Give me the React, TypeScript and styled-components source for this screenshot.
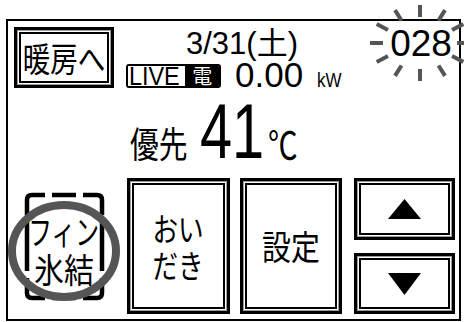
import React from "react";
import styled, { createGlobalStyle } from "styled-components";

const Global = createGlobalStyle`
  html, body { margin: 0; padding: 0; background: #fff; }
  body {
    font-family: "Liberation Sans", "Noto Sans CJK JP", sans-serif;
    color: #000;
    width: 464px;
    height: 322px;
    overflow: hidden;
  }
  #root { padding-top: 19px; }
`;

const JP = `"Noto Sans CJK JP", "Liberation Sans", sans-serif`;
const LAT = `"Liberation Sans", "Noto Sans CJK JP", sans-serif`;

const Screen = styled.div`
  box-sizing: border-box;
  margin-left: 6px;
  width: 455px;
  height: 302px;
  border: 2px solid #000;
  display: flex;
  flex-direction: column;
`;

const Narrow = styled.span<{ $sx: number; $origin?: string }>`
  display: inline-block;
  white-space: nowrap;
  transform: scaleX(${(p) => p.$sx});
  transform-origin: ${(p) => p.$origin ?? "center"};
`;

const PanelButton = styled.div<{ $w: number; $h?: number; $ml?: number }>`
  box-sizing: border-box;
  width: ${(p) => p.$w}px;
  ${(p) => (p.$h ? `height: ${p.$h}px;` : "")}
  margin-left: ${(p) => p.$ml ?? 0}px;
  border: 3px solid #000;
  box-shadow: inset 0 0 0 1px #9a9a9a, inset 0 0 0 2px #fff,
    inset 0 0 0 4px #000;
  background: #fff;
  display: flex;
  flex-direction: column;
  align-items: center;
  justify-content: center;
  font-family: ${JP};
  color: #000;
`;

const ButtonLabel = styled.div<{ $size: number; $lh?: number }>`
  font-size: ${(p) => p.$size}px;
  line-height: ${(p) => p.$lh ?? p.$size}px;
  text-align: center;
`;

/* ---------- top row ---------- */
const TopRow = styled.div`
  box-sizing: border-box;
  height: 68px;
  padding: 6px 0 0 6px;
  display: flex;
  align-items: flex-start;
`;

const InfoColumn = styled.div`
  margin-left: 12px;
  padding-top: 3px;
  display: flex;
  flex-direction: column;
`;

const DateText = styled.div`
  font-family: ${LAT};
  font-size: 31px;
  line-height: 27px;
  padding-left: 60px;
  white-space: nowrap;
`;

const PowerRow = styled.div`
  margin-top: 3px;
  display: flex;
  align-items: baseline;
`;

const LiveBadge = styled.div`
  align-self: flex-end;
  margin-bottom: 2px;
  box-sizing: border-box;
  width: 95px;
  height: 24px;
  border: 2px solid #000;
  border-radius: 3px;
  overflow: hidden;
  display: flex;
`;

const LiveText = styled.span`
  flex: 1;
  font-family: ${LAT};
  font-size: 26px;
  line-height: 20px;
  padding-left: 1px;
  background: #fff;
  color: #000;
`;

const DenText = styled.span`
  width: 38px;
  background: #000;
  color: #fff;
  font-family: ${JP};
  font-size: 20px;
  line-height: 20px;
  display: flex;
  align-items: center;
  justify-content: center;
`;

const PowerValue = styled.span`
  margin-left: 14px;
  font-family: ${LAT};
  font-size: 35px;
  line-height: 30px;
`;

const PowerUnit = styled.span`
  margin-left: 14px;
  font-family: ${LAT};
  font-size: 20px;
  line-height: 20px;
`;

const CodeBox = styled.div`
  position: relative;
  margin-left: auto;
  margin-top: -2px;
  width: 76px;
  font-family: ${LAT};
  font-size: 37px;
  line-height: 37px;
  text-align: center;
`;

const CodeText = styled.span`
  position: relative;
`;

const BlinkRays = styled.svg`
  position: absolute;
  left: -20px;
  top: -25px;
  overflow: visible;
  pointer-events: none;
`;

/* ---------- middle row ---------- */
const MiddleRow = styled.div`
  box-sizing: border-box;
  height: 89px;
  padding-left: 122px;
  display: flex;
  align-items: flex-end;
`;

const PriorityLabel = styled.div`
  width: 72px;
  margin-right: -14px;
  margin-bottom: 18px;
  font-family: ${JP};
  font-size: 36px;
  line-height: 36px;
`;

const BigTemp = styled.div`
  width: 87px;
  margin-left: 12px;
  margin-right: -23px;
  margin-bottom: 8px;
  font-family: ${LAT};
  font-size: 78px;
  line-height: 78px;
`;

const DegreeMark = styled.div`
  width: 38px;
  margin-left: 4px;
  margin-bottom: 16px;
  font-family: ${JP};
  font-size: 38px;
  line-height: 38px;
`;

/* ---------- bottom row ---------- */
const BottomRow = styled.div`
  box-sizing: border-box;
  flex: 1;
  padding: 0 4px 5px 0;
  display: flex;
  align-items: stretch;
`;

const FinArea = styled.div`
  position: relative;
  width: 112px;
  margin-right: 7px;
  padding-top: 8px;
  box-sizing: border-box;
  display: flex;
  flex-direction: column;
  align-items: center;
  justify-content: center;
  font-family: ${JP};
`;

const FinMarks = styled.svg`
  position: absolute;
  left: 0;
  top: 0;
  overflow: visible;
`;

const FinLabel = styled.div`
  position: relative;
  font-size: 34px;
  line-height: 38px;
  text-align: center;
`;

const ArrowColumn = styled.div`
  margin-left: 12px;
  width: 101px;
  display: flex;
  flex-direction: column;
  justify-content: space-between;
`;

const rays = Array.from({ length: 12 }, (_, i) => {
  const a = (i * 30 * Math.PI) / 180;
  const cx = 57;
  const cy = 43;
  return {
    x1: cx + 37 * Math.cos(a),
    y1: cy + 26 * Math.sin(a),
    x2: cx + 50 * Math.cos(a),
    y2: cy + 38 * Math.sin(a),
  };
});

export default function App() {
  return (
    <>
      <Global />
      <Screen>
        <TopRow>
          <PanelButton $w={100} $h={61}>
            <ButtonLabel $size={34}>
              <Narrow $sx={0.81}>暖房へ</Narrow>
            </ButtonLabel>
          </PanelButton>
          <InfoColumn>
            <DateText>3/31(土)</DateText>
            <PowerRow>
              <LiveBadge>
                <LiveText>
                  <Narrow $sx={0.9} $origin="left">LIVE</Narrow>
                </LiveText>
                <DenText>電</DenText>
              </LiveBadge>
              <PowerValue>0.00</PowerValue>
              <PowerUnit>
                <Narrow $sx={0.85} $origin="left">kW</Narrow>
              </PowerUnit>
            </PowerRow>
          </InfoColumn>
          <CodeBox>
            <BlinkRays width="120" height="90" viewBox="0 0 120 90">
              {rays.map((r, i) => (
                <line
                  key={i}
                  x1={r.x1}
                  y1={r.y1}
                  x2={r.x2}
                  y2={r.y2}
                  stroke="#555"
                  strokeWidth="4"
                />
              ))}
            </BlinkRays>
            <CodeText>028</CodeText>
          </CodeBox>
        </TopRow>

        <MiddleRow>
          <PriorityLabel>
            <Narrow $sx={0.8} $origin="left">優先</Narrow>
          </PriorityLabel>
          <BigTemp>
            <Narrow $sx={0.74} $origin="left">41</Narrow>
          </BigTemp>
          <DegreeMark>
            <Narrow $sx={0.78} $origin="left">℃</Narrow>
          </DegreeMark>
        </MiddleRow>

        <BottomRow>
          <FinArea>
            <FinMarks width="112" height="136" viewBox="0 0 112 136">
              <g stroke="#000" strokeWidth="4.5" fill="none">
                <path d="M19 37 V22 Q19 17 24 17 H37" />
                <path d="M75 17 H89 Q94 17 94 22 V37" />
                <path d="M19 100 V115 Q19 120 24 120 H37" />
                <path d="M75 120 H89 Q94 120 94 115 V100" />
                <path d="M44 17 H68" />
                <path d="M44 120 H68" />
                <path d="M19 44 V93" />
                <path d="M94 44 V93" />
              </g>
              <ellipse
                cx="56"
                cy="73"
                rx="52"
                ry="46"
                stroke="#555"
                strokeWidth="8"
                fill="none"
              />
            </FinMarks>
            <FinLabel>
              <Narrow $sx={0.7}>フィン</Narrow>
            </FinLabel>
            <FinLabel>
              <Narrow $sx={0.88}>氷結</Narrow>
            </FinLabel>
          </FinArea>
          <PanelButton $w={103}>
            <ButtonLabel $size={32} $lh={37}>
              <Narrow $sx={0.8}>おい</Narrow>
              <br />
              <Narrow $sx={0.8}>だき</Narrow>
            </ButtonLabel>
          </PanelButton>
          <PanelButton $w={102} $ml={10}>
            <ButtonLabel $size={34}>
              <Narrow $sx={0.85}>設定</Narrow>
            </ButtonLabel>
          </PanelButton>
          <ArrowColumn>
            <PanelButton $w={101} $h={62}>
              <svg width="33" height="20" viewBox="0 0 33 20">
                <polygon points="0,20 16.5,0 33,20" fill="#000" />
              </svg>
            </PanelButton>
            <PanelButton $w={101} $h={61}>
              <svg width="33" height="22" viewBox="0 0 33 22">
                <polygon points="0,0 33,0 16.5,22" fill="#000" />
              </svg>
            </PanelButton>
          </ArrowColumn>
        </BottomRow>
      </Screen>
    </>
  );
}
